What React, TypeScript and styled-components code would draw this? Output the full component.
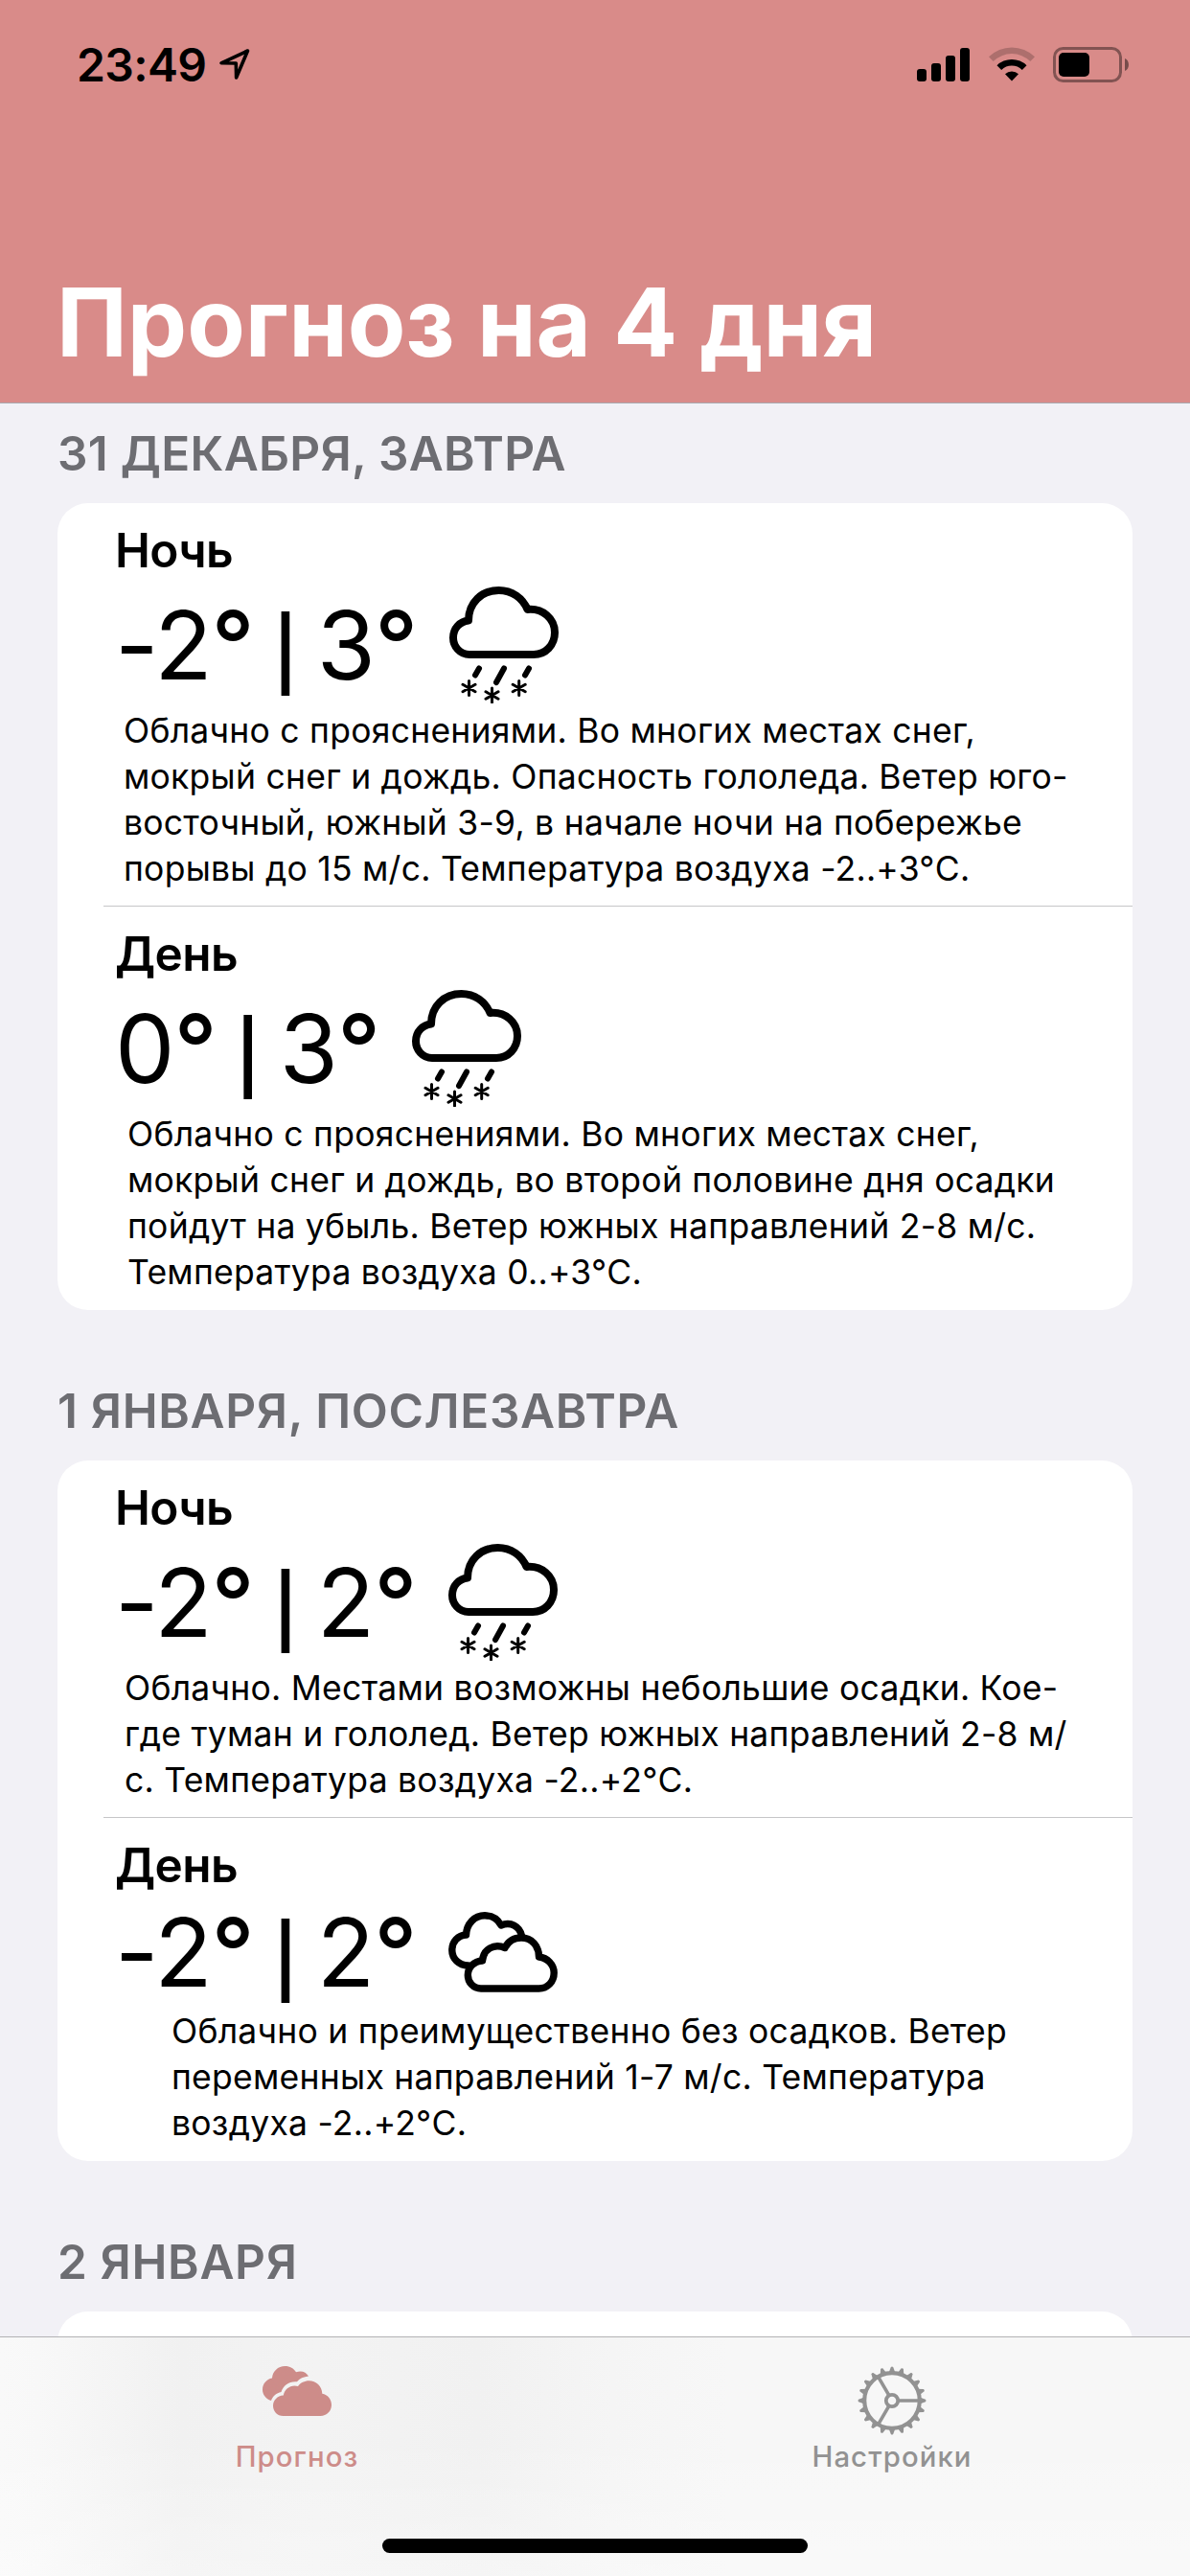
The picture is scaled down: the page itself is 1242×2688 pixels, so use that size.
import React from 'react';
import styled, { createGlobalStyle } from 'styled-components';

const Global = createGlobalStyle`
  * { box-sizing: border-box; }
  html, body { margin: 0; padding: 0; }
  body {
    width: 1242px;
    height: 2688px;
    overflow: hidden;
    background: #f2f1f6;
    font-family: Inter, "Liberation Sans", sans-serif;
    color: #000;
  }
  svg { display: block; flex: none; }
`;

const Screen = styled.div`
  display: flex;
  flex-direction: column;
  width: 1242px;
  height: 2688px;
  overflow: hidden;
  background: #f2f1f6;
`;

const Header = styled.header`
  flex: none;
  height: 421px;
  display: flex;
  flex-direction: column;
  justify-content: space-between;
  background: #d98b89;
  border-bottom: 1px solid #a9a8ae;
`;

const StatusBar = styled.div`
  display: flex;
  justify-content: space-between;
  align-items: flex-start;
  padding: 39px 63px 0 80px;
`;

const StatusLeft = styled.div`
  display: flex;
  align-items: flex-start;
  gap: 13px;
`;

const Clock = styled.div`
  font-size: 48px;
  line-height: 58px;
  font-weight: 600;
  letter-spacing: -0.6px;
`;

const ArrowBox = styled.div`
  padding-top: 11px;
`;

const StatusIcons = styled.div`
  display: flex;
  align-items: flex-start;
  padding-top: 10px;
  gap: 19px;
`;

const Title = styled.h1`
  margin: 0;
  padding: 0 0 24px 59px;
  font-size: 99px;
  line-height: 120px;
  font-weight: 700;
  letter-spacing: -0.1px;
  color: #fff;
`;

const List = styled.main`
  flex: 1;
  min-height: 0;
  overflow: hidden;
  padding: 0 60px;
`;

const SectionTitle = styled.h2<{ $first?: boolean }>`
  margin: 0;
  height: ${(p) => (p.$first ? 104 : 157)}px;
  display: flex;
  align-items: flex-end;
  padding-bottom: 22px;
  font-size: 49.5px;
  line-height: 60px;
  font-weight: 600;
  letter-spacing: ${(p) => (p.$first ? 0.3 : 0.65)}px;
  color: #6d6d72;
  white-space: pre;
`;

const Card = styled.section`
  padding-bottom: 1px;
  background: #fff;
  border-radius: 32px;
  overflow: hidden;
`;

const Divider = styled.div`
  height: 1px;
  margin-left: 48px;
  background: #c6c6c8;
`;

const Period = styled.article`
  display: flex;
  flex-direction: column;
  padding: 19px 0 8px;
`;

const PeriodName = styled.h3`
  margin: 0;
  padding-left: 60px;
  font-size: 49.5px;
  line-height: 60px;
  font-weight: 600;
  letter-spacing: -0.6px;
`;

const TempRow = styled.div<{ $height: number }>`
  display: flex;
  align-items: center;
  height: ${(p) => p.$height}px;
  margin-top: 3px;
  padding-left: 60px;
  gap: 34px;
`;

const Temps = styled.div`
  display: flex;
  align-items: baseline;
  font-size: 99px;
  line-height: 120px;
  font-weight: 400;
  letter-spacing: -1px;
  white-space: pre;
`;

const Degree = styled.span`
  font-weight: 500;
`;

const Bar = styled.span`
  width: 66px;
  text-align: center;
  font-size: 73.5px;
  line-height: 90px;
  font-weight: 600;
  letter-spacing: 0;
`;

const Description = styled.p<{ $indent: number }>`
  margin: 0;
  padding: 1px 0 6px ${(p) => p.$indent}px;
  font-size: 35.5px;
  line-height: 48px;
  letter-spacing: 0.25px;
  white-space: pre;
`;

const TabBar = styled.nav`
  flex: none;
  height: 250px;
  border-top: 1px solid #b2b2b4;
  background:
    linear-gradient(180deg, rgba(255, 255, 255, 0) 40%, rgba(255, 255, 255, 0.3) 100%),
    linear-gradient(90deg, #f9f9f9 0, #f8f8f8 40px, #f1f1f1 190px, #f3f3f3 330px, #f1f1f1 500px, #f5f5f5 640px, #f7f7f7 760px, #f7f7f7 100%);
  display: flex;
  flex-direction: column;
  justify-content: space-between;
  align-items: center;
  padding-bottom: 24px;
`;

const Tabs = styled.div`
  width: 100%;
  display: grid;
  grid-template-columns: 619px 1fr;
`;

const Tab = styled.div<{ $active?: boolean }>`
  display: flex;
  flex-direction: column;
  align-items: center;
  padding-top: 30px;
  color: ${(p) => (p.$active ? '#cd8c89' : '#929292')};
`;

const TabIcon = styled.div`
  height: 72px;
`;

const TabLabel = styled.div`
  margin-top: 4px;
  padding-left: 1px;
  font-size: 29.3px;
  line-height: 38px;
  font-weight: 500;
  letter-spacing: 1.1px;
`;

const HomeIndicator = styled.div`
  width: 444px;
  height: 15px;
  border-radius: 8px;
  background: #000;
`;

const LocationArrow = () => (
  <svg width="34" height="34" viewBox="0 0 34 34" fill="none" stroke="#000" strokeWidth="3.6" strokeLinejoin="round">
    <path d="M3 15.800 L30.500 3 L18.600 31 L18.300 16 Z" />
  </svg>
);

const Signal = () => (
  <svg width="56" height="36" viewBox="0 0 56 36">
    <rect x="0" y="23" width="10" height="13" rx="3" />
    <rect x="15" y="17" width="10" height="19" rx="3" />
    <rect x="30" y="9" width="10" height="27" rx="3" />
    <rect x="45" y="1" width="10" height="35" rx="3" />
  </svg>
);

const Wifi = () => (
  <svg width="48" height="36" viewBox="0 0 48 36">
    <path d="M0 10.300 A34 34 0 0 1 48 10.300 L43.300 15 A27.500 27.500 0 0 0 4.700 15 Z" fillOpacity="0.2" />
    <path d="M8.500 19.300 A22 22 0 0 1 39.500 19.300 L34.800 24 A15.500 15.500 0 0 0 13.200 24 Z" />
    <path d="M17 28.300 A10 10 0 0 1 31 28.300 L24 35.500 Z" />
  </svg>
);

const Battery = () => (
  <svg width="80" height="38" viewBox="0 0 80 38">
    <rect x="1.5" y="1.5" width="69" height="34" rx="9" fill="none" stroke="#000" strokeOpacity="0.4" strokeWidth="3" />
    <rect x="6" y="6" width="32" height="25" rx="5" />
    <path d="M75 12 C80.300 14 80.300 23 75 25 Z" fillOpacity="0.45" />
  </svg>
);

const SleetIcon = () => (
  <svg width="114" height="122" viewBox="0 0 114 122" fill="none" stroke="#000" strokeLinecap="round" strokeLinejoin="round">
    <path
      strokeWidth="8"
      d="M21 71 C11 71 4 62.500 4 53.500 C4 43.500 11 36.500 20 35.500 C20 17 33.500 4 51.500 4 C65.500 4 76.500 12 81.500 24 C97.500 22.500 110 33.500 110 48 C110 61 100.500 71 88 71 Z"
    />
    <path strokeWidth="6" d="M31 85.500 L27 92.500 M57 85.500 L49 100 M83 85.500 L79 92.500" />
    <path
      strokeWidth="3"
      d="M20.500 98.500 V113.500 M14 102.300 L27 109.800 M14 109.800 L27 102.300 M44.500 106 V121 M38 109.800 L51 117.300 M38 117.300 L51 109.800 M72.700 98.500 V113.500 M66.200 102.300 L79.200 109.800 M66.200 109.800 L79.200 102.300"
    />
  </svg>
);

const CloudsIcon = () => (
  <svg width="114" height="84" viewBox="0 0 114 84" fill="none" stroke="#000" strokeWidth="7.4" strokeLinecap="round" strokeLinejoin="round">
    <path d="M20.500 56 C11 55.500 3.800 49 3.800 40 C3.800 31 10 24.500 18.500 24 C19 12.500 27 3.800 38 3.800 C45.500 3.800 51.500 7.500 55 14 C65 9.800 74.500 15 76.500 25" />
    <path d="M34 80 C26 80 20.300 73.500 20.300 66 C20.300 58 26.500 51.500 35.500 51 C36.500 39 47.500 32.500 59 37.500 C62.500 30.500 68.500 27 76 27 C87 27 94.500 35.500 94.500 47 C103.500 48 110.200 55 110.200 63.500 C110.200 73 103.500 80 94.500 80 Z" />
  </svg>
);

const CloudsFilled = () => (
  <svg width="72" height="52" viewBox="0 0 72 52" fill="currentColor">
    <path d="M9 36 C3.500 34 0 30 0 24.500 C0 18.500 4.200 13.500 10 12.500 C10.500 5.500 16 0 23.500 0 C28.500 0 32.700 2.300 35 6.300 C40.500 4.300 45.500 6 48 10.500 C43 11 38.500 13 36 16.300 C28 15.500 21.500 20 19.500 27 C14.500 28 10.800 31 9 36 Z" />
    <path d="M21.500 52 C15.500 52 11 47.300 11 41.500 C11 35.500 15.500 31 21.800 30.500 C23 23.500 30 18.800 37 21 C39.500 17.500 44 15.300 48.500 15.300 C56 15.300 62 20.800 62.300 28.700 C68 29.700 72 34.500 72 40.300 C72 47 67 52 60.500 52 Z" />
  </svg>
);

const GearIcon = () => {
  const teeth = Array.from({ length: 20 }, (_, i) => i * 18);
  return (
    <svg width="72" height="72" viewBox="0 0 72 72" fill="none" stroke="currentColor">
      {teeth.map((a) => (
        <path key={a} d="M63.500 32 L71 34.800 Q72 36 71 37.200 L63.500 40 Z" fill="currentColor" stroke="none" transform={`rotate(${a} 36 36)`} />
      ))}
      <circle cx="36" cy="36" r="28.8" strokeWidth="4.2" />
      <circle cx="36" cy="36" r="6.2" strokeWidth="3.8" />
      <path strokeWidth="3.6" d="M43 36 H63 M32.500 29.900 L22 11.800 M32.500 42.100 L22 60.200" />
    </svg>
  );
};

type Kind = 'sleet' | 'clouds';

interface Forecast {
  name: string;
  low: number;
  high: number;
  kind: Kind;
  indent: number;
  lines: string[];
}

interface Day {
  title: string;
  periods: Forecast[];
}

const days: Day[] = [
  {
    title: '31 ДЕКАБРЯ, ЗАВТРА',
    periods: [
      {
        name: 'Ночь',
        low: -2,
        high: 3,
        kind: 'sleet',
        indent: 69,
        lines: [
          'Облачно с прояснениями. Во многих местах снег,',
          'мокрый снег и дождь. Опасность гололеда. Ветер юго-',
          'восточный, южный 3-9, в начале ночи на побережье',
          'порывы до 15 м/с. Температура воздуха -2..+3°C.',
        ],
      },
      {
        name: 'День',
        low: 0,
        high: 3,
        kind: 'sleet',
        indent: 73,
        lines: [
          'Облачно с прояснениями. Во многих местах снег,',
          'мокрый снег и дождь, во второй половине дня осадки',
          'пойдут на убыль. Ветер южных направлений 2-8 м/с.',
          'Температура воздуха 0..+3°C.',
        ],
      },
    ],
  },
  {
    title: '1 ЯНВАРЯ, ПОСЛЕЗАВТРА',
    periods: [
      {
        name: 'Ночь',
        low: -2,
        high: 2,
        kind: 'sleet',
        indent: 70,
        lines: [
          'Облачно. Местами возможны небольшие осадки. Кое-',
          'где туман и гололед. Ветер южных направлений 2-8 м/',
          'с. Температура воздуха -2..+2°C.',
        ],
      },
      {
        name: 'День',
        low: -2,
        high: 2,
        kind: 'clouds',
        indent: 119,
        lines: [
          'Облачно и преимущественно без осадков. Ветер',
          'переменных направлений 1-7 м/с. Температура',
          'воздуха -2..+2°C.',
        ],
      },
    ],
  },
];

const Temperature = ({ value }: { value: number }) => (
  <span>
    {value}
    <Degree>°</Degree>
  </span>
);

const ForecastPeriod = ({ item }: { item: Forecast }) => (
  <Period>
    <PeriodName>{item.name}</PeriodName>
    <TempRow $height={item.kind === 'sleet' ? 131 : 116}>
      <Temps>
        <Temperature value={item.low} />
        <Bar>|</Bar>
        <Temperature value={item.high} />
      </Temps>
      {item.kind === 'sleet' ? <SleetIcon /> : <CloudsIcon />}
    </TempRow>
    <Description $indent={item.indent}>{item.lines.join('\n')}</Description>
  </Period>
);

const CardPeek = styled(Card)`
  height: 200px;
`;

export default function App() {
  return (
    <Screen>
      <Global />
      <Header>
        <StatusBar>
          <StatusLeft>
            <Clock>23:49</Clock>
            <ArrowBox>
              <LocationArrow />
            </ArrowBox>
          </StatusLeft>
          <StatusIcons>
            <Signal />
            <Wifi />
            <Battery />
          </StatusIcons>
        </StatusBar>
        <Title>Прогноз на 4 дня</Title>
      </Header>
      <List>
        {days.map((day, i) => (
          <React.Fragment key={day.title}>
            <SectionTitle $first={i === 0}>{day.title}</SectionTitle>
            <Card>
              {day.periods.map((p, j) => (
                <React.Fragment key={p.name}>
                  {j > 0 && <Divider />}
                  <ForecastPeriod item={p} />
                </React.Fragment>
              ))}
            </Card>
          </React.Fragment>
        ))}
        <SectionTitle>2 ЯНВАРЯ</SectionTitle>
        <CardPeek />
      </List>
      <TabBar>
        <Tabs>
          <Tab $active>
            <TabIcon>
              <CloudsFilled />
            </TabIcon>
            <TabLabel>Прогноз</TabLabel>
          </Tab>
          <Tab>
            <TabIcon>
              <GearIcon />
            </TabIcon>
            <TabLabel>Настройки</TabLabel>
          </Tab>
        </Tabs>
        <HomeIndicator />
      </TabBar>
    </Screen>
  );
}
